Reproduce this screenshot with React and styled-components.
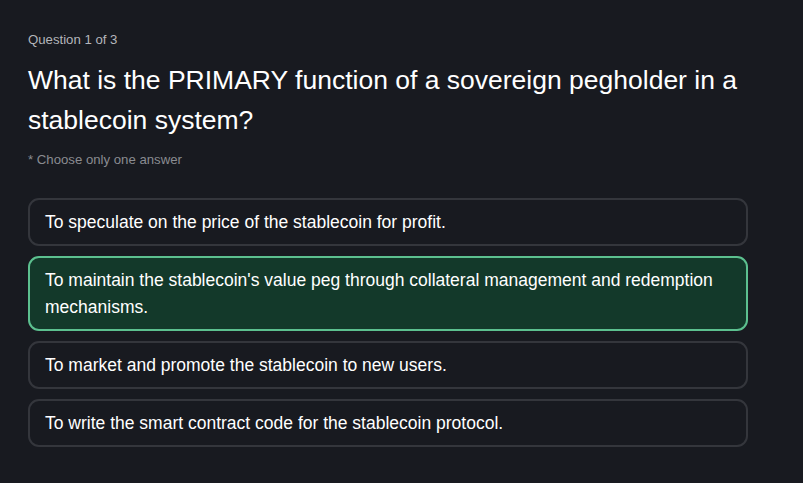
import React from "react";
import styled, { createGlobalStyle } from "styled-components";

const Global = createGlobalStyle`
  html, body { margin: 0; padding: 0; background: #181a20; }
  body { font-family: "Liberation Sans", Arial, sans-serif; color: #ffffff; }
`;

const Page = styled.div`
  padding: 31px 28px 20px 28px;
  width: 720px;
`;

const Counter = styled.div`
  font-size: 13.2px;
  line-height: 18px;
  color: #b4b6bb;
  margin-bottom: 11px;
`;

const Title = styled.h1`
  margin: 0;
  font-size: 26.5px;
  font-weight: 400;
  line-height: 40px;
  color: #ffffff;
`;

const Hint = styled.div`
  margin-top: 11px;
  font-size: 13.2px;
  line-height: 18px;
  color: #8a8c91;
`;

const Options = styled.div`
  margin-top: 29px;
  display: flex;
  flex-direction: column;
  gap: 10px;
`;

const Option = styled.button`
  display: block;
  width: 100%;
  text-align: left;
  box-sizing: border-box;
  font-family: inherit;
  font-size: 17.5px;
  line-height: 27px;
  color: #ffffff;
  padding: 8.5px 15px;
  border-radius: 11px;
  border: 2px solid ${(p) => (p.$selected ? "#5cc08f" : "#34363c")};
  background: ${(p) => (p.$selected ? "#13392a" : "#181a20")};
  cursor: pointer;
`;

const answers = [
  "To speculate on the price of the stablecoin for profit.",
  "To maintain the stablecoin's value peg through collateral management and redemption mechanisms.",
  "To market and promote the stablecoin to new users.",
  "To write the smart contract code for the stablecoin protocol.",
];

export default function App() {
  return (
    <>
      <Global />
      <Page>
        <Counter>Question 1 of 3</Counter>
        <Title>What is the PRIMARY function of a sovereign pegholder in a stablecoin system?</Title>
        <Hint>* Choose only one answer</Hint>
        <Options>
          {answers.map((a, i) => (
            <Option key={i} $selected={i === 1}>{a}</Option>
          ))}
        </Options>
      </Page>
    </>
  );
}
